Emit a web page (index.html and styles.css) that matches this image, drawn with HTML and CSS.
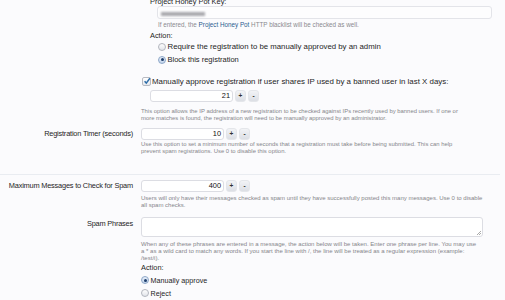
FILE: index.html
```html
<!DOCTYPE html>
<html>
<head>
<meta charset="utf-8">
<link rel="stylesheet" href="styles.css">
</head>
<body>
<div class="page">
  <div class="row top">
    <div class="dt"></div>
    <div class="dd sub">
      <div class="text key-label">Project Honey Pot Key:</div>
      <div class="keybox"><span class="redacted"></span></div>
      <div class="hint">If entered, the <a class="link">Project Honey Pot</a> HTTP blacklist will be checked as well.</div>
      <div class="text action-label">Action:</div>
      <div class="radio-row big r1"><span class="radio"></span>Require the registration to be manually approved by an admin</div>
      <div class="radio-row"><span class="radio on"></span>Block this registration</div>
    </div>
  </div>

  <div class="row checkrow">
    <div class="dt"></div>
    <div class="dd">
      <div class="check-row"><span class="check"><svg viewBox="0 0 8 8" width="8" height="8"><path d="M1.6 4.2 L3.3 6.1 L6.9 1.3" fill="none" stroke="#2f6ea8" stroke-width="1.5"/></svg></span>Manually approve registration if user shares IP used by a banned user in last X days:</div>
      <div class="spin indent"><div class="spin-input">21</div><span class="btn">+</span><span class="btn">-</span></div>
      <div class="desc d1">This option allows the IP address of a new registration to be checked against IPs recently used by banned users. If one or<br>more matches is found, the registration will need to be manually approved by an administrator.</div>
    </div>
  </div>

  <div class="row timer">
    <div class="dt">Registration Timer (seconds)</div>
    <div class="dd">
      <div class="spin"><div class="spin-input">10</div><span class="btn">+</span><span class="btn">-</span></div>
      <div class="desc d2">Use this option to set a minimum number of seconds that a registration must take before being submitted. This can help<br>prevent spam registrations. Use 0 to disable this option.</div>
    </div>
  </div>

  <hr class="sep">

  <div class="row maxmsg">
    <div class="dt">Maximum Messages to Check for Spam</div>
    <div class="dd">
      <div class="spin"><div class="spin-input">400</div><span class="btn">+</span><span class="btn">-</span></div>
      <div class="desc d3">Users will only have their messages checked as spam until they have successfully posted this many messages. Use 0 to disable<br>all spam checks.</div>
    </div>
  </div>

  <div class="row phrases">
    <div class="dt dt-top">Spam Phrases</div>
    <div class="dd">
      <div class="textarea"><span class="grip"></span></div>
      <div class="desc d4">When any of these phrases are entered in a message, the action below will be taken. Enter one phrase per line. You may use<br>a * as a wild card to match any words. If you start the line with /, the line will be treated as a regular expression (example:<br>/test/i).</div>
      <div class="text action2">Action:</div>
      <div class="radio-row small r3"><span class="radio on"></span>Manually approve</div>
      <div class="radio-row small"><span class="radio"></span>Reject</div>
    </div>
  </div>
</div>
</body>
</html>
```

FILE: styles.css
```css
html, body {
  margin: 0;
  padding: 0;
  background: #fbfbfd;
  overflow: hidden;
}
body {
  width: 505px;
  height: 300px;
  font-family: "Liberation Sans", Arial, sans-serif;
  color: #222;
}
.page {
  margin-top: -3px;
}
.row {
  display: grid;
  grid-template-columns: 133px 342px;
  column-gap: 8px;
}
.dt {
  text-align: right;
  font-size: 7.4px;
  letter-spacing: -0.2px;
  line-height: 9px;
  color: #1e1e1e;
  padding-top: 1.5px;
}
.dt-top {
  padding-top: 2px;
}
.dd {
  min-width: 0;
}
.sub {
  padding-left: 9px;
  width: 342px;
}
.text {
  font-size: 7.4px;
  line-height: 9px;
  color: #1e1e1e;
}
.keybox {
  margin-left: 7px;
  width: 333px;
  height: 11px;
  border: 1px solid #e3e4e9;
  border-radius: 3px;
  background: #fdfdfe;
}
.redacted {
  display: block;
  margin: 5px 0 0 3px;
  width: 44px;
  height: 4px;
  background: #a9a9ae;
  filter: blur(1px);
}
.hint {
  margin: 2px 0 0 8px;
  font-size: 6.3px;
  line-height: 8px;
  color: #8a8a8f;
  white-space: nowrap;
}
.link {
  color: #2c5b90;
}
.action-label {
  margin-top: 2px;
}
.radio-row {
  display: flex;
  align-items: center;
  font-size: 7.5px;
  line-height: 9px;
  height: 13px;
  color: #1e1e1e;
  white-space: nowrap;
}
.radio-row.big {
  font-size: 7.8px;
}
.radio-row.small {
  font-size: 7.2px;
}
.sub .radio-row {
  padding-left: 8px;
}
.radio {
  width: 6px;
  height: 6px;
  border-radius: 50%;
  border: 1px solid #b3b6be;
  background: linear-gradient(#fefefe, #e2e4ea);
  margin-right: 1.5px;
  flex: none;
  position: relative;
}
.radio.on {
  border-color: #8ea7c8;
  background: linear-gradient(#e6eef9, #c3d5ec);
}
.radio.on::after {
  content: "";
  position: absolute;
  left: 1.5px;
  top: 1.5px;
  width: 3px;
  height: 3px;
  border-radius: 50%;
  background: #1d3d6b;
}
.checkrow {
  margin-top: 10.5px;
}
.check-row {
  display: flex;
  align-items: center;
  font-size: 7.9px;
  line-height: 9px;
  height: 9px;
  white-space: nowrap;
  color: #1e1e1e;
}
.check {
  width: 7px;
  height: 7px;
  margin-left: 1px;
  margin-right: 1px;
  border: 1px solid #b7bac2;
  border-radius: 2px;
  background: linear-gradient(#fff, #e7e9ee);
  display: inline-flex;
  align-items: center;
  justify-content: center;
  flex: none;
}
.check svg { flex: none; }
.spin {
  display: flex;
  align-items: center;
  gap: 2px;
  height: 12.5px;
}
.spin.indent {
  margin: 4px 0 0 9px;
}
.spin-input {
  width: 79px;
  height: 10.5px;
  border: 1px solid #dcdde3;
  border-radius: 3px;
  background: #fff;
  font-size: 7.4px;
  line-height: 10.5px;
  text-align: right;
  padding-right: 2px;
  color: #111;
}
.btn {
  width: 9px;
  height: 9.5px;
  border-radius: 3px;
  background: linear-gradient(#f2f3f6, #dcdfe5);
  border: 1px solid #e4e6ea;
  font-size: 6.5px;
  line-height: 9.5px;
  text-align: center;
  color: #333;
  font-weight: bold;
}
.desc {
  font-size: 5.9px;
  line-height: 7px;
  color: #86868b;
  white-space: nowrap;
}
.d1 {
  margin-top: 5.5px;
}
.d2 {
  margin-top: 0.5px;
}
.d3 {
  margin-top: 2.5px;
  font-size: 6.02px;
}
.d4 {
  margin-top: 4.5px;
  font-size: 6.05px;
}
.timer {
  margin-top: 6px;
}
.sep {
  margin: 19px 5px 0 0;
  border: 0;
  border-top: 1px solid #e9ecf1;
  height: 0;
}
.maxmsg {
  margin-top: 5px;
}
.phrases {
  margin-top: 8px;
}
.textarea {
  width: 340px;
  height: 18px;
  border: 1px solid #dcdde3;
  border-radius: 3px;
  background: #fff;
  position: relative;
}
.grip {
  position: absolute;
  right: 1px;
  bottom: 1px;
  width: 4px;
  height: 4px;
  background: linear-gradient(135deg, transparent 45%, #aaa 45%, #aaa 55%, transparent 55%, transparent 70%, #aaa 70%, #aaa 80%, transparent 80%);
}
.action2 {
  margin-top: 1px;
}
.r3 {
  margin-top: 1.5px;
}
```
